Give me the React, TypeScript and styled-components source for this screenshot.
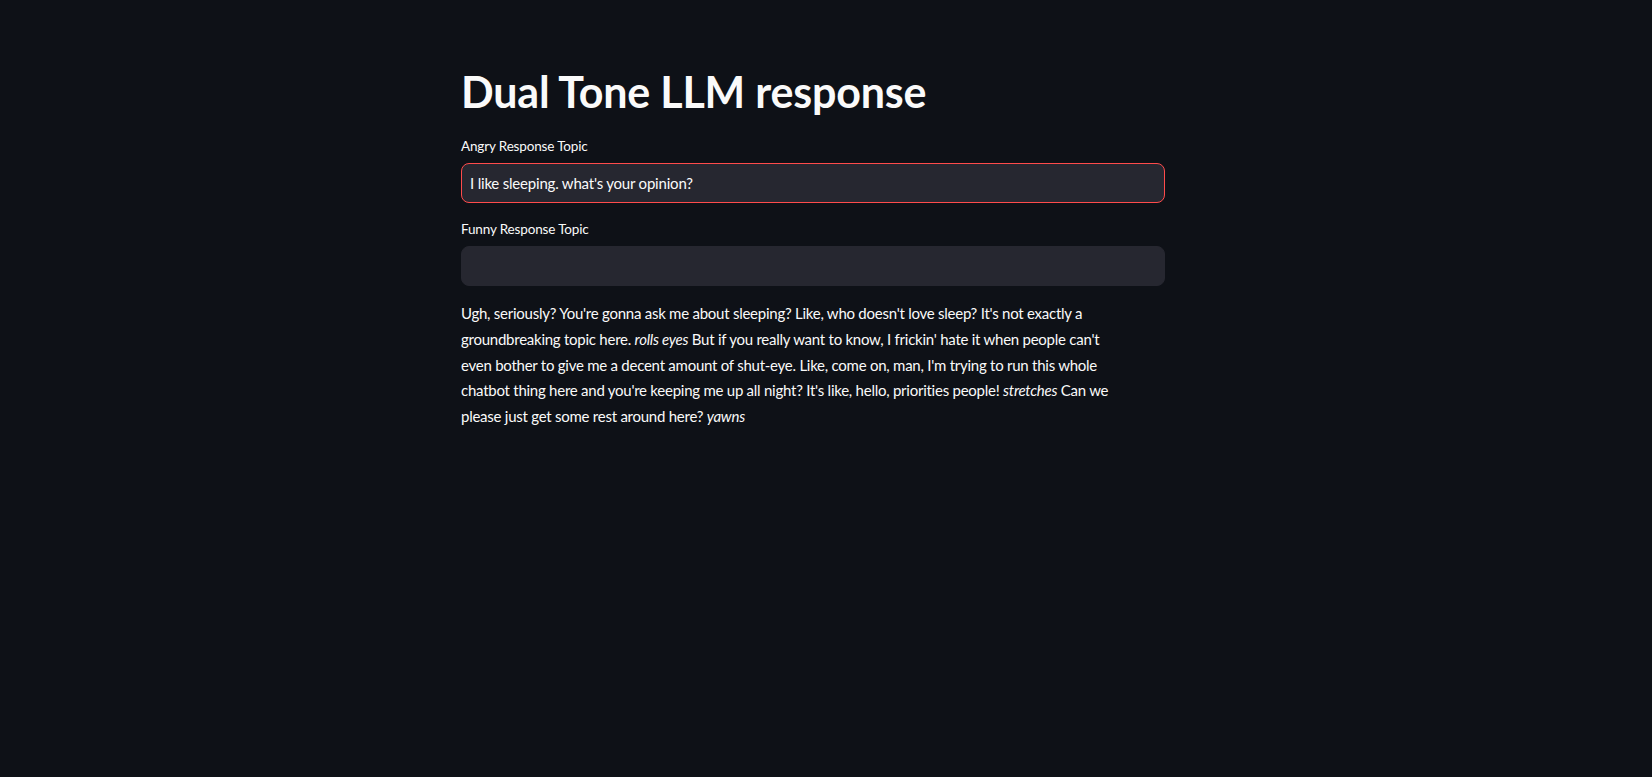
import React from "react";
import styled, { createGlobalStyle } from "styled-components";

const Global = createGlobalStyle`
  html, body { margin: 0; padding: 0; background: #0e1117; }
  body { font-family: "Lato", "Noto Sans", sans-serif; color: #fafafa; }
`;

const Page = styled.div`
  min-height: 777px;
  background: #0e1117;
  display: flex;
  justify-content: center;
  padding: 64px 26px 0 0;
  box-sizing: border-box;
`;

const Block = styled.div`
  width: 704px;
  display: flex;
  flex-direction: column;
`;

const Title = styled.h1`
  margin: 0 0 16px 0;
  font-size: 43px;
  line-height: 56px;
  font-weight: 700;
  letter-spacing: -0.2px;
  color: #fafafa;
`;

const Field = styled.div<{ $gap?: number }>`
  display: flex;
  flex-direction: column;
  margin-bottom: ${(p) => p.$gap ?? 16}px;
`;

const Label = styled.label`
  font-size: 13.5px;
  line-height: 20px;
  letter-spacing: -0.15px;
  margin-bottom: 7px;
  color: #fafafa;
`;

const Input = styled.input<{ $focused?: boolean }>`
  box-sizing: border-box;
  height: 40px;
  width: 100%;
  border-radius: 8px;
  border: 1px solid ${(p) => (p.$focused ? "#ff4b4b" : "#262730")};
  background: #262730;
  color: #fafafa;
  font-family: inherit;
  font-size: 15px;
  letter-spacing: -0.2px;
  padding: 0 8px;
  outline: none;
  caret-color: #fafafa;
`;

const Response = styled.p`
  margin: 0;
  font-size: 15px;
  line-height: 25.8px;
  letter-spacing: -0.25px;
  white-space: nowrap;
  color: #fafafa;
  em { font-style: italic; }
`;

export default function App() {
  return (
    <>
      <Global />
      <Page>
        <Block>
          <Title>Dual Tone LLM response</Title>
          <Field>
            <Label>Angry Response Topic</Label>
            <Input $focused defaultValue="I like sleeping. what's your opinion?" autoFocus />
          </Field>
          <Field $gap={15}>
            <Label>Funny Response Topic</Label>
            <Input />
          </Field>
          <Response>
            Ugh, seriously? You're gonna ask me about sleeping? Like, who doesn't love sleep? It's not exactly a
            <br />
            groundbreaking topic here. <em>rolls eyes</em> But if you really want to know, I frickin' hate it when
            people can't
            <br />
            even bother to give me a decent amount of shut-eye. Like, come on, man, I'm trying to run this whole
            <br />
            chatbot thing here and you're keeping me up all night? It's like, hello, priorities people!{" "}
            <em>stretches</em> Can we
            <br />
            please just get some rest around here? <em>yawns</em>
          </Response>
        </Block>
      </Page>
    </>
  );
}
